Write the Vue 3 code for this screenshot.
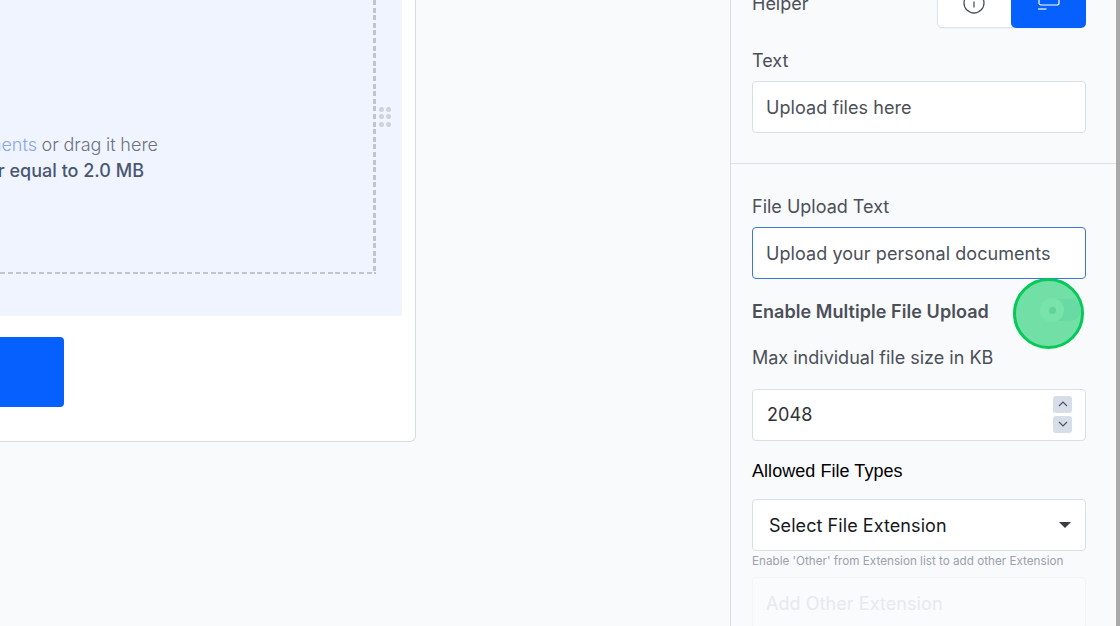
<script setup>
const dots = [0, 1, 2, 3, 4, 5]
</script>

<template>
  <div class="page">
    <main class="canvas">
      <section class="card">
        <div class="zone">
          <div class="dashed">
            <p class="drop-line"><span class="link">Upload your personal documents</span>&nbsp;or drag it here</p>
            <p class="size-line">File size should be less than or equal to 2.0 MB</p>
            <div class="handle">
              <i v-for="d in dots" :key="d"></i>
            </div>
          </div>
        </div>
        <div class="actions"><button class="submit" type="button"></button></div>
      </section>
    </main>
    <aside class="panel">
      <div class="helper-row">
        <span class="label">Helper</span>
        <div class="segment">
          <span class="seg-item info">
            <svg width="22" height="22" viewBox="0 0 22 22" fill="none" stroke="#4b5563" stroke-width="1.3">
              <circle cx="11" cy="11" r="10" />
              <path d="M11 9.5v6" />
              <path d="M11 6.2v1.4" />
            </svg>
          </span>
          <span class="seg-item active">
            <svg width="24" height="24" viewBox="0 0 24 24" fill="none" stroke="#fff" stroke-width="1.2">
              <rect x="2" y="-1" width="20" height="15" rx="2" />
              <path d="M1 18h8.5" />
            </svg>
          </span>
        </div>
      </div>
      <label class="label text-label">Text</label>
      <div class="field">Upload files here</div>
      <hr class="divider" />
      <label class="label upload-label">File Upload Text</label>
      <div class="field focus">Upload your personal documents</div>
      <div class="toggle-row">
        <strong>Enable Multiple File Upload</strong>
        <span class="click-ring"></span>
        <span class="toggle"><span class="thumb"></span></span>
      </div>
      <label class="label max-label">Max individual file size in KB</label>
      <div class="field number">
        <span>2048</span>
        <span class="spin">
          <span class="spin-btn"><svg width="10" height="6" viewBox="0 0 10 6" fill="none" stroke="#4b5563" stroke-width="1.2"><path d="M1 5l4-4 4 4" /></svg></span>
          <span class="spin-btn"><svg width="10" height="6" viewBox="0 0 10 6" fill="none" stroke="#4b5563" stroke-width="1.2"><path d="M1 1l4 4 4-4" /></svg></span>
        </span>
      </div>
      <label class="types-label">Allowed File Types</label>
      <div class="field select">
        <span>Select File Extension</span>
        <span class="caret"></span>
      </div>
      <p class="hint">Enable 'Other' from Extension list to add other Extension</p>
      <div class="field disabled">Add Other Extension</div>
    </aside>
    <div class="scrollbar"></div>
  </div>
</template>

<style>
html, body { margin: 0; overflow: hidden; }
</style>

<style scoped>
.page {
  display: flex;
  width: 1120px;
  height: 626px;
  overflow: hidden;
  background: #f9fafc;
  font-family: Inter, "Liberation Sans", sans-serif;
}
.canvas { width: 730px; flex: none; }
.card {
  box-sizing: border-box;
  width: 416px;
  height: 442px;
  display: flex;
  flex-direction: column;
  background: #fff;
  border-right: 1px solid #d5dee6;
  border-bottom: 1px solid #d5dee6;
  border-bottom-right-radius: 6px;
}
.zone {
  box-sizing: border-box;
  width: 402px;
  height: 316px;
  flex: none;
  padding-right: 26px;
  padding-bottom: 42px;
  background: #f0f4ff;
  border-bottom-right-radius: 2px;
}
.dashed {
  box-sizing: border-box;
  position: relative;
  height: 100%;
  display: flex;
  flex-direction: column;
  align-items: flex-end;
  padding: 132px 218px 0 0;
  background-image:
    repeating-linear-gradient(180deg, #c1c4d0 0 5px, transparent 5px 7.6px),
    repeating-linear-gradient(90deg, #c1c4d0 0 5px, transparent 5px 7.8px);
  background-position: right top, left bottom;
  background-size: 3px 100%, 100% 2px;
  background-repeat: no-repeat;
}
.drop-line, .size-line {
  margin: 0;
  flex: none;
  white-space: nowrap;
  font-size: 18px;
  line-height: 26px;
}
.drop-line { color: #6b7280; font-weight: 300; word-spacing: -.4px; }
.link { color: #8aa6ea; }
.size-line { color: #4a5670; font-weight: 500; margin-right: 14px; }
.handle {
  position: absolute;
  right: -15px;
  top: 107px;
  display: grid;
  grid-template-columns: 5px 5px;
  gap: 2.3px;
}
.handle i {
  width: 5px;
  height: 5px;
  border-radius: 50%;
  background: #ced2de;
}
.actions { padding-top: 21px; }
.submit {
  display: block;
  width: 64px;
  height: 70px;
  padding: 0;
  border: 0;
  border-radius: 0 4px 4px 0;
  background: #0560fd;
}
.panel {
  box-sizing: border-box;
  width: 386px;
  height: 626px;
  flex: none;
  padding: 0 30px 0 21px;
  border-left: 1px solid #d5dee6;
  background: #f9fafc;
  color: #4b4f58;
  overflow: hidden;
  position: relative;
}
.scrollbar { width: 4px; flex: none; background: #a9a9a9; }
.label {
  display: block;
  font-size: 18px;
  line-height: 26px;
  color: #4b4f58;
}
.helper-row {
  display: flex;
  justify-content: space-between;
  align-items: flex-start;
  height: 28px;
}
.helper-row .label { margin-top: -9px; }
.segment {
  display: flex;
  flex: none;
  box-sizing: border-box;
  width: 149px;
  height: 50px;
  margin-top: -22px;
  background: #fff;
  border: 1px solid #dfe3ea;
  border-radius: 5px;
  box-shadow: 0 1px 1px rgba(0, 0, 0, .04);
}
.seg-item {
  display: flex;
  align-items: center;
  justify-content: center;
}
.seg-item.info {
  flex: none;
  box-sizing: border-box;
  width: 74px;
  padding-right: 2px;
}
.seg-item.active {
  flex: 1;
  background: #0560fd;
  border-radius: 5px;
  margin: -1px;
}
.seg-item svg { overflow: visible; }
.text-label { margin-top: 20px; }
.field {
  box-sizing: border-box;
  display: flex;
  align-items: center;
  height: 52px;
  padding: 0 13px;
  background: #fff;
  border: 1px solid #d8dfe8;
  border-radius: 4px;
  font-size: 18px;
  letter-spacing: .07px;
  color: #4b4f58;
  white-space: nowrap;
}
.text-label + .field { margin-top: 7px; }
.divider {
  height: 1px;
  margin: 30px -30px 30px -21px;
  border: 0;
  background: #d9e0e8;
}
.upload-label + .field { margin-top: 7px; }
.field.focus { border-color: #3a77d8; }
.toggle-row {
  position: relative;
  display: flex;
  align-items: center;
  height: 26px;
  margin-top: 19px;
}
.toggle-row strong {
  font-size: 18px;
  font-weight: 600;
  letter-spacing: .06px;
  color: #4b4f58;
}
.click-ring {
  position: absolute;
  left: 261px;
  top: -20px;
  box-sizing: border-box;
  width: 71px;
  height: 71px;
  border: 3px solid #05ca58;
  border-radius: 50%;
  background: #72e0a6;
}
.toggle {
  position: absolute;
  left: 300px;
  top: 1px;
  width: 29px;
  height: 22px;
  background: #69daa4;
  border-radius: 0 11px 11px 0;
}
.thumb {
  position: absolute;
  left: -12px;
  top: -1px;
  width: 24px;
  height: 24px;
  border-radius: 50%;
  background: #78e3aa;
}
.thumb::after {
  content: "";
  position: absolute;
  left: 8.5px;
  top: 8.5px;
  width: 7px;
  height: 7px;
  border-radius: 50%;
  background: #62d29c;
}
.max-label { margin-top: 21px; }
.number {
  margin-top: 18px;
  justify-content: space-between;
  padding: 0 13px 2px 14px;
  color: #2f3238;
}
.spin { display: flex; flex-direction: column; gap: 3px; }
.spin-btn {
  display: flex;
  align-items: center;
  justify-content: center;
  width: 19px;
  height: 17px;
  background: #d7dee8;
  border-radius: 3px;
}
.types-label {
  display: block;
  margin-top: 17px;
  font-family: "Liberation Sans", sans-serif;
  font-size: 18px;
  line-height: 26px;
  letter-spacing: .05px;
  color: #000;
}
.select {
  margin-top: 15px;
  justify-content: space-between;
  padding: 0 14px 0 16px;
  color: #16181d;
}
.caret {
  width: 0;
  height: 0;
  border-left: 6px solid transparent;
  border-right: 6px solid transparent;
  border-top: 6px solid #3a3d42;
}
.hint {
  margin: 3px 0 8px;
  font-size: 11.7px;
  line-height: 15px;
  color: #9ca1ab;
  white-space: nowrap;
}
.field.disabled {
  background: #fafbfd;
  border-color: #f2f4f7;
  color: #e7e9ee;
}
</style>
